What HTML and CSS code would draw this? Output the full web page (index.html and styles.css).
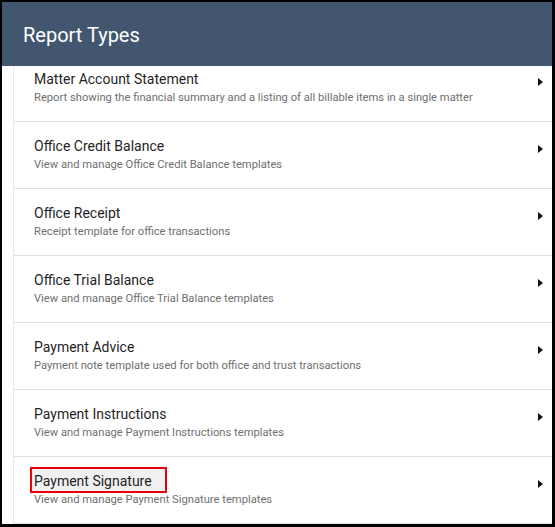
FILE: index.html
```html
<!DOCTYPE html>
<html>
<head>
<meta charset="utf-8">
<link rel="stylesheet" href="styles.css">
</head>
<body>
<div class="frame">
  <header class="header"><h1 class="title">Report Types</h1></header>
  <div class="viewport">
    <ul class="list">
      <li class="row"><div class="text"><div class="name">Matter Account Statement</div><div class="desc">Report showing the financial summary and a listing of all billable items in a single matter</div></div><span class="arrow"></span></li>
      <li class="row"><div class="text"><div class="name">Office Credit Balance</div><div class="desc">View and manage Office Credit Balance templates</div></div><span class="arrow"></span></li>
      <li class="row"><div class="text"><div class="name">Office Receipt</div><div class="desc">Receipt template for office transactions</div></div><span class="arrow"></span></li>
      <li class="row"><div class="text"><div class="name">Office Trial Balance</div><div class="desc">View and manage Office Trial Balance templates</div></div><span class="arrow"></span></li>
      <li class="row"><div class="text"><div class="name">Payment Advice</div><div class="desc">Payment note template used for both office and trust transactions</div></div><span class="arrow"></span></li>
      <li class="row"><div class="text"><div class="name">Payment Instructions</div><div class="desc">View and manage Payment Instructions templates</div></div><span class="arrow"></span></li>
      <li class="row"><div class="text"><div class="name"><span class="highlight">Payment Signature</span></div><div class="desc">View and manage Payment Signature templates</div></div><span class="arrow"></span></li>
    </ul>
  </div>
</div>
</body>
</html>
```
FILE: styles.css
```css
html, body {
  margin: 0;
  padding: 0;
  background: #000;
}
.frame {
  box-sizing: border-box;
  width: 555px;
  height: 527px;
  border-style: solid;
  border-color: #000;
  border-width: 2px 3px 3px 2px;
  background: #fff;
  display: flex;
  flex-direction: column;
  overflow: hidden;
  font-family: Roboto, "Liberation Sans", sans-serif;
}
.header {
  height: 64px;
  flex: none;
  background: #42576f;
  display: flex;
  align-items: center;
  padding-left: 21px;
  position: relative;
  z-index: 1;
}
.title {
  margin: 0;
  color: #fff;
  font-size: 20px;
  font-weight: 400;
  line-height: 22px;
  margin-top: 1px;
}
.viewport {
  flex: 1;
  overflow: hidden;
  margin-left: 11px;
  border-left: 1px solid #e8e8e8;
}
.list {
  list-style: none;
  margin: -11px 0 0 0;
  padding: 0;
}
.row {
  display: flex;
  align-items: flex-start;
  height: 66px;
  border-bottom: 1px solid #e0e0e0;
  padding: 0 9px 0 20px;
}
.text {
  flex: 1;
  padding-top: 16px;
}
.name {
  font-size: 14px;
  line-height: 16px;
  color: #1f1f1f;
}
.desc {
  margin-top: 4px;
  font-size: 11.2px;
  line-height: 14px;
  color: #6f6f6f;
}
.arrow {
  width: 0;
  height: 0;
  margin-top: 23px;
  border-top: 4.5px solid transparent;
  border-bottom: 4.5px solid transparent;
  border-left: 5px solid #111;
}
.highlight {
  position: relative;
  z-index: 0;
  display: inline-block;
}
.highlight::before {
  content: "";
  position: absolute;
  left: -4px;
  right: -15px;
  top: -6px;
  bottom: -4px;
  border: 2px solid #e8000b;
  background: #f0f0f0;
  z-index: -1;
}
```
